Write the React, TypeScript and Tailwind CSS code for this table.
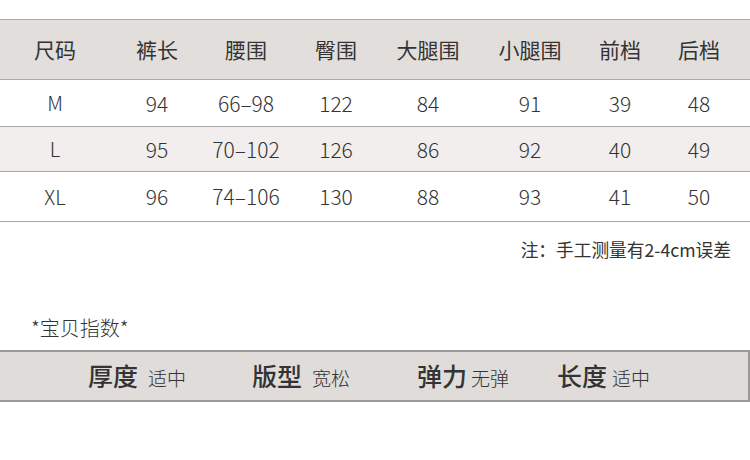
import React from 'react';

// size chart data
const headers = ['尺码', '裤长', '腰围', '臀围', '大腿围', '小腿围', '前档', '后档'];

const rows = [
  { size: 'M', cells: ['94', '66–98', '122', '84', '91', '39', '48'], height: 'h-[47px]', bg: 'bg-white' },
  { size: 'L', cells: ['95', '70–102', '126', '86', '92', '40', '49'], height: 'h-[45px]', bg: 'bg-[#f1eeed]' },
  { size: 'XL', cells: ['96', '74–106', '130', '88', '93', '41', '50'], height: 'h-[49px]', bg: 'bg-white' },
];

const indexes = [
  { label: '厚度', value: '适中', ml: 'ml-[88px]', gap: 'gap-[10px]' },
  { label: '版型', value: '宽松', ml: 'ml-[66px]', gap: 'gap-[10px]' },
  { label: '弹力', value: '无弹', ml: 'ml-[67px]', gap: 'gap-[4px]' },
  { label: '长度', value: '适中', ml: 'ml-[48px]', gap: 'gap-[5px]' },
];

const cols = 'grid grid-cols-[110px_94px_84px_96px_88px_116px_64px_94px_1fr]';
const font = "font-['Noto_Sans_CJK_SC',sans-serif]";

export default function App() {
  return (
    <div className={`w-[750px] h-[460px] bg-white text-[#333] ${font}`}>
      <div className="h-[19px]" />
      {/* table */}
      <div className="border-y border-[#a8a8a8]">
        <div className={`${cols} h-[60px] items-center bg-[#e2dedc] border-b border-[#a8a8a8]`}>
          {headers.map((h) => (
            <div key={h} className="text-center text-[21px] leading-none">
              {h}
            </div>
          ))}
          <div />
        </div>
        {rows.map((r, i) => (
          <div
            key={r.size}
            className={`${cols} ${r.height} ${r.bg} items-center ${i < rows.length - 1 ? 'border-b border-[#a8a8a8]' : ''}`}
          >
            <div className="text-center text-[20px] font-light leading-none">{r.size}</div>
            {r.cells.map((c, j) => (
              <div key={j} className="text-center text-[21px] font-light leading-none">
                {c}
              </div>
            ))}
            <div />
          </div>
        ))}
      </div>

      <div className="flex justify-end pr-[19px] mt-[19px]">
        <span className="text-[17.7px] leading-none">注：手工测量有2-4cm误差</span>
      </div>

      <div className="pl-[31px] mt-[59px] text-[20px] font-light leading-none">*宝贝指数*</div>

      {/* 宝贝指数 band */}
      <div className="mt-[12px] w-[750px] h-[52px] flex items-center bg-[#e0dcda] border-y-2 border-r-2 border-[#999]">
        {indexes.map((it) => (
          <div key={it.label} className={`flex items-baseline ${it.ml} ${it.gap}`}>
            <span className="text-[25px] leading-none font-medium">{it.label}</span>
            <span className="text-[19px] font-light leading-none">{it.value}</span>
          </div>
        ))}
      </div>
    </div>
  );
}
